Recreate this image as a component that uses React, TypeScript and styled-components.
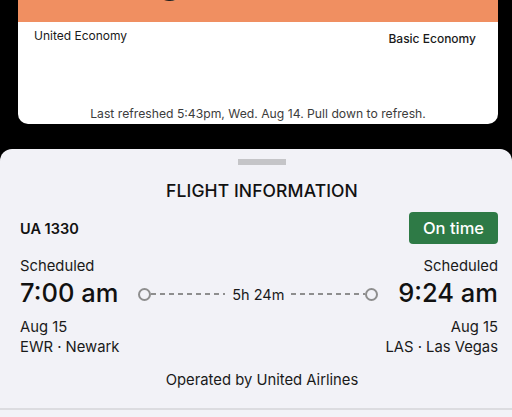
import styled, { createGlobalStyle } from "styled-components";
import { FunctionComponent } from "react";

const Global = createGlobalStyle`
  html, body {
    margin: 0;
    padding: 0;
    background: #000;
  }
  body {
    font-family: Inter, "Noto Sans", "Liberation Sans", sans-serif;
    color: #111;
    -webkit-font-smoothing: antialiased;
  }
`;

const Screen = styled.div`
  width: 512px;
  height: 417px;
  overflow: hidden;
  display: flex;
  flex-direction: column;
  background: #000;
`;

const TicketCard = styled.div`
  margin: 0 14px 0 18px;
  height: 124px;
  background: #fff;
  border-radius: 0 0 10px 10px;
  display: flex;
  flex-direction: column;
  overflow: hidden;
`;

// the big route text of the ticket is scrolled up, only its feet show
const Band = styled.div`
  height: 22px;
  background: #f08f61;
  overflow: hidden;
  display: flex;
  justify-content: space-between;
  padding: 0 60px 0 104px;
`;

const BandText = styled.div`
  font-size: 40px;
  font-weight: 600;
  line-height: 40px;
  margin-top: -42px;
  color: #222;
`;

const ClassRow = styled.div`
  display: flex;
  justify-content: space-between;
  align-items: flex-start;
  padding: 6px 22px 0 16px;
  font-size: 12px;
`;

const ClassLabel = styled.div<{ $strong?: boolean }>`
  font-weight: ${(p) => (p.$strong ? 500 : 400)};
  margin-top: ${(p) => (p.$strong ? "3px" : "0")};
  color: #1a1a1a;
`;

const Refreshed = styled.div`
  margin-top: auto;
  padding-bottom: 3px;
  text-align: center;
  font-size: 12.2px;
  color: #3c3c3c;
`;

const Sheet = styled.div`
  margin-top: 25px;
  flex: 1;
  background: #f2f2f7;
  border-radius: 12px 12px 0 0;
  display: flex;
  flex-direction: column;
  padding: 10px 14px 0 20px;
`;

const Handle = styled.div`
  align-self: center;
  width: 48px;
  height: 6px;
  background: #c5c5c8;
  margin-left: 6px;
`;

const Title = styled.div`
  margin-top: 15px;
  text-align: center;
  font-size: 17.5px;
  font-weight: 500;
  letter-spacing: 0.1px;
  margin-left: 6px;
`;

const FlightRow = styled.div`
  margin-top: 11px;
  display: flex;
  justify-content: space-between;
  align-items: center;
`;

const FlightNumber = styled.div`
  font-size: 14.5px;
  font-weight: 600;
`;

const StatusBadge = styled.div`
  width: 89px;
  height: 32px;
  border-radius: 4px;
  background: #2e7a46;
  color: #fff;
  font-size: 16.5px;
  font-weight: 500;
  display: flex;
  align-items: center;
  justify-content: center;
`;

const Row = styled.div<{ $top?: number }>`
  display: flex;
  justify-content: space-between;
  align-items: center;
  margin-top: ${(p) => p.$top ?? 0}px;
`;

const Small = styled.div`
  font-size: 14.8px;
  line-height: 20px;
  color: #1a1a1a;
`;

const BigTime = styled.div`
  font-size: 25.5px;
  font-weight: 500;
  line-height: 30px;
  color: #111;
`;

const Route = styled.div`
  flex: 1;
  display: flex;
  align-items: center;
  margin: 2px 20px 0;
`;

const Dot = styled.div`
  width: 9px;
  height: 9px;
  border: 2px solid #8e8e8e;
  border-radius: 50%;
  flex-shrink: 0;
`;

const Dash = styled.div`
  flex: 1;
  height: 1.5px;
  background: repeating-linear-gradient(
    to right,
    #8e8e8e 0 5px,
    transparent 5px 9px
  );
`;

const Duration = styled.div`
  font-size: 14.5px;
  padding: 0 7px;
  color: #1a1a1a;
`;

const Operated = styled.div`
  margin-top: 14px;
  text-align: center;
  font-size: 14.8px;
  color: #1a1a1a;
  margin-left: 6px;
`;

const Divider = styled.div`
  margin: 19px -14px 0 -20px;
  border-top: 2px solid #dcdce0;
`;

const App: FunctionComponent = () => {
  return (
    <Screen>
      <Global />
      <TicketCard>
        <Band>
          <BandText>p g</BandText>
          <BandText>2:5</BandText>
        </Band>
        <ClassRow>
          <ClassLabel>United Economy</ClassLabel>
          <ClassLabel $strong>Basic Economy</ClassLabel>
        </ClassRow>
        <Refreshed>Last refreshed 5:43pm, Wed. Aug 14. Pull down to refresh.</Refreshed>
      </TicketCard>
      <Sheet>
        <Handle />
        <Title>FLIGHT INFORMATION</Title>
        <FlightRow>
          <FlightNumber>UA 1330</FlightNumber>
          <StatusBadge>On time</StatusBadge>
        </FlightRow>
        <Row $top={12}>
          <Small>Scheduled</Small>
          <Small>Scheduled</Small>
        </Row>
        <Row $top={2}>
          <BigTime>7:00 am</BigTime>
          <Route>
            <Dot />
            <Dash />
            <Duration>5h 24m</Duration>
            <Dash />
            <Dot />
          </Route>
          <BigTime>9:24 am</BigTime>
        </Row>
        <Row $top={9}>
          <Small>Aug 15</Small>
          <Small>Aug 15</Small>
        </Row>
        <Row>
          <Small>EWR · Newark</Small>
          <Small>LAS · Las Vegas</Small>
        </Row>
        <Operated>Operated by United Airlines</Operated>
        <Divider />
      </Sheet>
    </Screen>
  );
};

export default App;
